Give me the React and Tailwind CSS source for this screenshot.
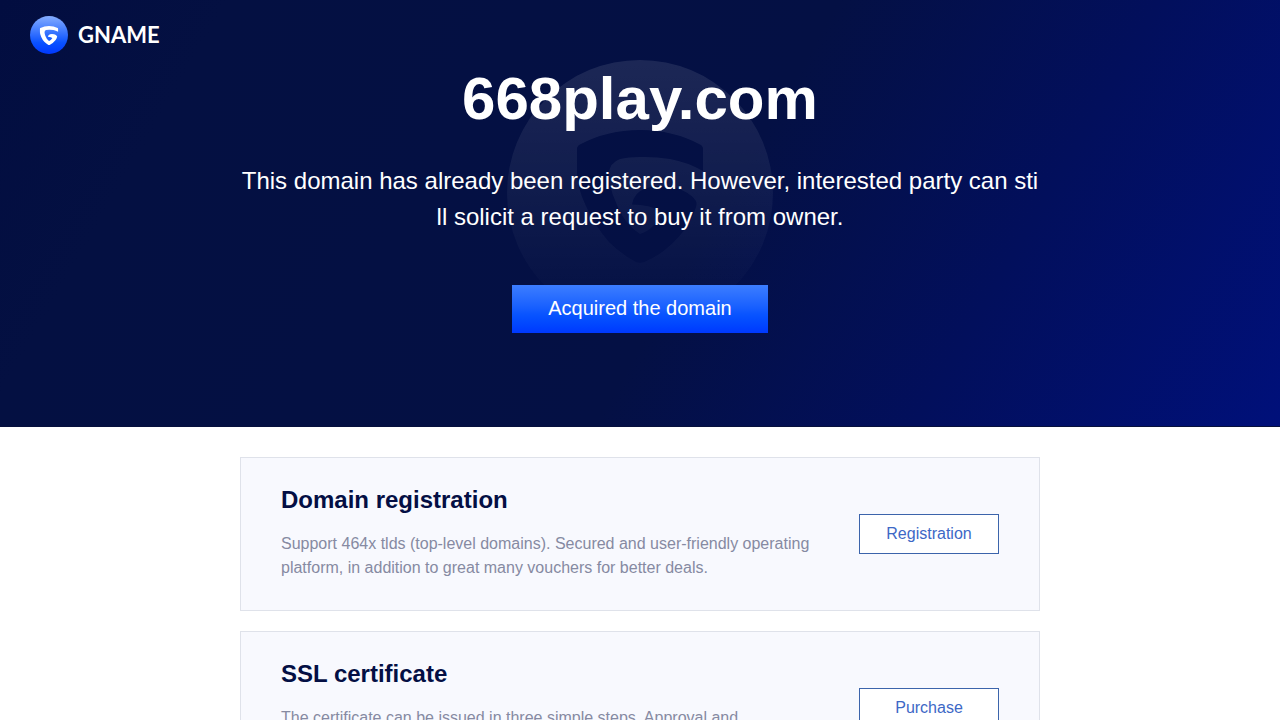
const SHIELD =
  "M60 79 Q60 76 63 74.500 Q90 60 123 60 Q156 60 183 74.500 Q186 76 186 79 L186 101 Q170 92 153 89 Q138 86.500 123 87 Q111 87 103 89 Q92 93 92 104 Q93 120 98 130 Q106 153 123 164 Q130 162 135 157 L146 146 Q141 135 115 134.500 Q117 122 130 118 Q142 114 159 118 Q173 122 179 131 Q180 134 179 137 Q175 150 169 158 Q150 183 127 192 Q123 193.500 119 192 Q104 184 92 172 Q76 153 69 136 Q60 117 60 103 Z";

const services = [
  {
    title: "Domain registration",
    text: "Support 464x tlds (top-level domains). Secured and user-friendly operating platform, in addition to great many vouchers for better deals.",
    action: "Registration",
  },
  {
    title: "SSL certificate",
    text: "The certificate can be issued in three simple steps. Approval and configuration are completed quickly.",
    action: "Purchase",
  },
];

function LogoMark() {
  return (
    <svg className="size-[38px]" viewBox="0 0 38 38" aria-hidden="true">
      <defs>
        <linearGradient id="mark" x1="0" y1="0" x2="0" y2="1">
          <stop offset="0" stopColor="#85adff" />
          <stop offset="0.7" stopColor="#0a52ff" />
          <stop offset="1" stopColor="#0038ff" />
        </linearGradient>
      </defs>
      <circle cx="19" cy="19" r="19" fill="url(#mark)" />
      <path d={SHIELD} fill="#fff" transform="translate(1.300 1.300) scale(0.144)" />
    </svg>
  );
}

function Watermark() {
  return (
    <svg
      className="absolute top-0 left-1/2 w-[266px] h-[266px] -translate-x-1/2"
      viewBox="0 0 266 266"
      aria-hidden="true"
    >
      <defs>
        <linearGradient id="fade" x1="0" y1="0" x2="0" y2="1">
          <stop offset="0" stopColor="#fff" stopOpacity="0.1" />
          <stop offset="1" stopColor="#fff" stopOpacity="0" />
        </linearGradient>
        <mask id="cut">
          <rect width="266" height="266" fill="#fff" />
          <path d={SHIELD} fill="#000" transform="translate(10 10)" />
        </mask>
      </defs>
      <circle cx="133" cy="133" r="133" fill="url(#fade)" mask="url(#cut)" />
    </svg>
  );
}

function ServiceCard({ title, text, action }) {
  return (
    <article className="flex items-center gap-12 border border-[#dfe2ea] bg-[#f8f9fe] px-10 py-[30px]">
      <div className="flex-1">
        <h2 className="text-2xl leading-6 font-bold text-[#040f44]">{title}</h2>
        <p className="mt-5 text-base leading-6 text-[#868aa2]">{text}</p>
      </div>
      <a
        href="#"
        className="flex h-10 w-[140px] shrink-0 items-center justify-center border border-[#3c64ab] bg-white text-base text-[#3d68c6]"
      >
        {action}
      </a>
    </article>
  );
}

export default function App() {
  return (
    <div className="min-h-screen bg-white font-['Liberation_Sans',Arial,sans-serif]">
      <div className="border-b border-[#07103c] bg-[linear-gradient(120deg,#020d40_0%,#041042_15%,#041044_55%,#020f5c_76%,#00107a_100%)]">
        <header className="px-[30px] pt-4 pb-1.5">
          <a href="#" className="inline-flex items-center gap-2.5 align-top text-white">
            <LogoMark />
            <span className="font-['Lato',sans-serif] text-[22px] font-bold leading-none">GNAME</span>
          </a>
        </header>
        <section className="relative px-5 pb-[93px] text-center text-white">
          <Watermark />
          <div className="relative mx-auto max-w-[800px]">
            <h1 className="text-6xl leading-[78px] font-bold">668play.com</h1>
            <p className="mt-[25px] text-2xl leading-9 break-all">
              This domain has already been registered. However, interested party can still solicit a
              request to buy it from owner.
            </p>
            <button
              type="button"
              className="mt-[50px] block mx-auto h-12 w-64 bg-linear-to-b from-[#3c7dff] via-[#0a55ff] via-60% to-[#0038ff] pb-0.5 text-xl text-white"
            >
              Acquired the domain
            </button>
          </div>
        </section>
      </div>
      <main className="mx-auto flex w-full max-w-[800px] flex-col gap-5 py-[30px]">
        {services.map((service) => (
          <ServiceCard key={service.title} {...service} />
        ))}
      </main>
    </div>
  );
}
